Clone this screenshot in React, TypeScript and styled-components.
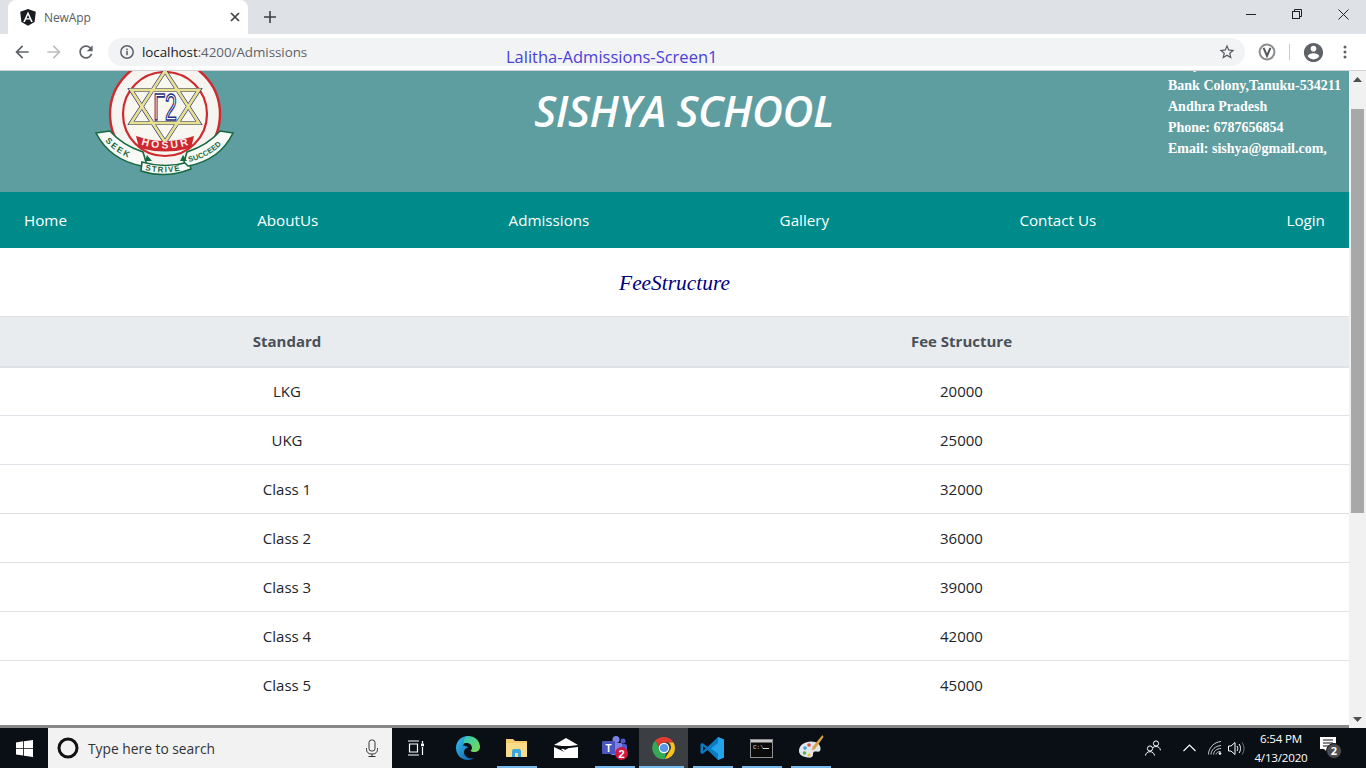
import React from "react";
import styled, { createGlobalStyle } from "styled-components";

const UI = `"Open Sans", "Noto Sans", Arial, sans-serif`;

const Global = createGlobalStyle`
  html, body { margin: 0; padding: 0; height: 100%; overflow: hidden; background: #fff; }
  * { box-sizing: border-box; }
  body { font-family: ${UI}; }
`;

const Screen = styled.div`
  position: relative;
  width: 1366px;
  height: 768px;
  display: flex;
  flex-direction: column;
  overflow: hidden;
`;

/* ---------- browser chrome ---------- */
const TabStrip = styled.div`
  height: 34px;
  background: #dee1e6;
  display: flex;
  align-items: flex-end;
  padding-left: 8px;
  flex: none;
`;
const Tab = styled.div`
  width: 240px;
  height: 34px;
  background: #fff;
  border-radius: 8px 8px 0 0;
  display: flex;
  align-items: center;
  padding: 0 8px 0 12px;
  gap: 8px;
`;
const TabTitle = styled.span`
  flex: 1;
  font-size: 12px;
  color: #5a5d62;
  letter-spacing: -0.1px;
`;
const NewTab = styled.div`
  width: 28px;
  height: 28px;
  margin: 0 0 3px 8px;
  display: flex;
  align-items: center;
  justify-content: center;
`;
const WindowControls = styled.div`
  margin-left: auto;
  display: flex;
  align-self: flex-start;
`;
const WindowButton = styled.div`
  width: 46px;
  height: 28px;
  display: flex;
  align-items: center;
  justify-content: center;
`;
const Toolbar = styled.div`
  height: 37px;
  background: #fff;
  border-bottom: 1px solid #cfd1d3;
  display: flex;
  align-items: flex-start;
  padding: 4px 5px 0 6px;
  flex: none;
`;
const NavButton = styled.div`
  width: 32px;
  height: 28px;
  display: flex;
  align-items: center;
  justify-content: center;
  flex: none;
`;
const Omnibox = styled.div`
  flex: 1;
  height: 28px;
  margin: 0 6px;
  background: #f1f3f4;
  border-radius: 14px;
  display: flex;
  align-items: center;
  padding: 0 9px 0 11px;
`;
const UrlHost = styled.span`
  margin-left: 7px;
  font-size: 13.4px;
  letter-spacing: -0.05px;
  color: #202124;
  flex: 1;
`;
const UrlPath = styled.span`
  color: #5f6368;
`;
const ToolDivider = styled.div`
  width: 1px;
  height: 16px;
  margin: 6px 7px 0 6px;
  background: #c8cacc;
  flex: none;
`;
const Overlay = styled.div`
  position: absolute;
  left: 506px;
  top: 45px;
  font-size: 16.5px;
  line-height: 23px;
  color: #4a3fd8;
  white-space: nowrap;
`;

/* ---------- page ---------- */
const Viewport = styled.div`
  flex: 1;
  min-height: 0;
  display: flex;
`;
const PageColumn = styled.div`
  flex: 1;
  min-width: 0;
  overflow: hidden;
  display: flex;
  flex-direction: column;
  border-bottom: 3px solid #888;
`;
const Header = styled.header`
  height: 160px;
  margin-top: -39px;
  background: #5f9ea0;
  display: grid;
  grid-template-columns: 337px 694px 1fr;
  flex: none;
`;
const LogoCell = styled.div`
  padding: 34px 0 0 95px;
`;
const SchoolName = styled.h1`
  margin: 0;
  padding-top: 55px;
  font: italic 600 42.5px/48px ${UI};
  letter-spacing: -0.4px;
  color: #fff;
  text-align: center;
  white-space: nowrap;
`;
const Address = styled.div`
  padding: 22px 0 0 137px;
  font: bold 14px/21px "Liberation Serif", "Times New Roman", serif;
  color: #fff;
  white-space: nowrap;
`;
const NavBar = styled.nav`
  height: 56px;
  background: #008b8b;
  display: flex;
  align-items: center;
  justify-content: space-between;
  padding: 0 24px;
  flex: none;
`;
const NavLink = styled.a`
  font-size: 15.2px;
  color: #fff;
`;
const SectionTitle = styled.h2`
  margin: 0;
  height: 68px;
  padding-top: 22px;
  font: italic 400 21.4px/26px "Liberation Serif", "Times New Roman", serif;
  color: #000080;
  text-align: center;
  flex: none;
`;
const FeeTable = styled.table`
  width: 100%;
  table-layout: fixed;
  border-collapse: collapse;
  font-size: 15px;
  color: #212529;
`;
const HeadCell = styled.th<{ $width: number }>`
  width: ${(p) => p.$width}px;
  height: 50px;
  padding: 0;
  background: #e9ecef;
  border-top: 1px solid #dee2e6;
  border-bottom: 2px solid #dee2e6;
  font-weight: 700;
  color: #495057;
  text-align: center;
`;
const Row = styled.tr`
  border-bottom: 1px solid #dee2e6;
  &:last-child { border-bottom: none; }
`;
const Cell = styled.td`
  height: 49px;
  padding: 0;
  text-align: center;
`;
const Scrollbar = styled.div`
  width: 17px;
  background: #f1f1f1;
  display: flex;
  flex-direction: column;
  align-items: center;
  flex: none;
`;
const ScrollArrow = styled.div`
  height: 17px;
  width: 17px;
  display: flex;
  align-items: center;
  justify-content: center;
  flex: none;
`;
const ScrollThumb = styled.div`
  width: 13px;
  height: 404px;
  margin-top: 21px;
  margin-bottom: auto;
  background: #a8a8a8;
`;

/* ---------- taskbar ---------- */
const Taskbar = styled.div`
  height: 40px;
  background: #0a0f15;
  display: flex;
  align-items: stretch;
  flex: none;
`;
const StartButton = styled.div`
  width: 48px;
  display: flex;
  align-items: center;
  justify-content: center;
  flex: none;
`;
const SearchBox = styled.div`
  width: 344px;
  background: #f2f2f2;
  display: flex;
  align-items: center;
  padding: 0 13px 0 9px;
  gap: 9px;
  flex: none;
`;
const SearchText = styled.span`
  flex: 1;
  font-size: 13.8px;
  color: #333;
`;
const TaskSlot = styled.div<{ $running?: boolean; $active?: boolean; $w?: number }>`
  position: relative;
  width: ${(p) => p.$w ?? 49}px;
  display: flex;
  align-items: center;
  justify-content: center;
  flex: none;
  background: ${(p) => (p.$active ? "#3b3f44" : "transparent")};
  &::after {
    content: "";
    display: ${(p) => (p.$running ? "block" : "none")};
    position: absolute;
    bottom: 0;
    left: ${(p) => (p.$active ? 0 : "4.5px")};
    right: ${(p) => (p.$active ? "4px" : "4.5px")};
    height: 2px;
    background: #76b9ed;
  }
`;
const TaskViewSlot = styled(TaskSlot)`
  padding-right: 3px;
`;
const Tray = styled.div`
  margin-left: auto;
  display: flex;
  align-items: center;
  flex: none;
`;
const TrayIcon = styled.div<{ $w: number }>`
  width: ${(p) => p.$w}px;
  display: flex;
  align-items: center;
  justify-content: center;
`;
const Clock = styled.div`
  width: 58px;
  margin-left: 5px;
  font-size: 11.6px;
  line-height: 19px;
  color: #fff;
  text-align: center;
  letter-spacing: -0.2px;
  white-space: nowrap;
`;

/* ---------- drawings ---------- */
const Mat = ({ d, color = "#5f6368", size = 20 }: { d: string; color?: string; size?: number }) => (
  <svg width={size} height={size} viewBox="0 0 24 24" fill={color}><path d={d} /></svg>
);
const BACK = "M20 11H7.83l5.59-5.59L12 4l-8 8 8 8 1.41-1.41L7.83 13H20v-2z";
const FWD = "M4 11h12.17l-5.59-5.59L12 4l8 8-8 8-1.41-1.41L16.17 13H4v-2z";
const RELOAD = "M17.65 6.35C16.2 4.9 14.21 4 12 4c-4.42 0-7.99 3.58-7.99 8s3.57 8 7.99 8c3.73 0 6.84-2.55 7.73-6h-2.08c-.82 2.33-3.04 4-5.65 4-3.31 0-6-2.69-6-6s2.69-6 6-6c1.66 0 3.14.69 4.22 1.78L13 11h7V4l-2.35 2.35z";
const STAR = "M22 9.24l-7.19-.62L12 2 9.19 8.63 2 9.24l5.46 4.73L5.82 21 12 17.27 18.18 21l-1.63-7.03L22 9.24zM12 15.4l-3.76 2.27 1-4.28-3.32-2.88 4.38-.38L12 6.1l1.71 4.04 4.38.38-3.32 2.88 1 4.28L12 15.4z";
const ACCOUNT = "M12 2C6.48 2 2 6.48 2 12s4.48 10 10 10 10-4.48 10-10S17.52 2 12 2zm0 3c1.66 0 3 1.34 3 3s-1.34 3-3 3-3-1.34-3-3 1.34-3 3-3zm0 14.2c-2.5 0-4.71-1.28-6-3.22.03-1.99 4-3.08 6-3.08 1.99 0 5.97 1.09 6 3.08-1.29 1.94-3.5 3.22-6 3.22z";

const AngularIcon = () => (
  <svg width="16" height="17" viewBox="0 0 16 17">
    <path d="M8 0 .2 2.8 1.4 13 8 16.8 14.6 13 15.8 2.8z" fill="#1a1c20" />
    <path d="M8 2.4 3.2 13h1.8l1-2.5h4l1 2.5h1.8zM8 6l1.4 3.2H6.6z" fill="#fff" />
  </svg>
);
const InfoIcon = () => (
  <svg width="16" height="16" viewBox="0 0 16 16" fill="none">
    <circle cx="8" cy="8" r="6.2" stroke="#5f6368" strokeWidth="1.5" />
    <rect x="7.2" y="7" width="1.6" height="4.2" fill="#5f6368" />
    <rect x="7.2" y="4.6" width="1.6" height="1.6" fill="#5f6368" />
  </svg>
);
const VExtension = () => (
  <svg width="18" height="18" viewBox="0 0 18 18" fill="none">
    <circle cx="9" cy="9" r="7.4" fill="#fff" stroke="#8b8d90" strokeWidth="2" />
    <path d="M5.6 4.8 9 13l3.4-8.2" stroke="#55585c" strokeWidth="2" />
  </svg>
);
const Dots = () => (
  <svg width="4" height="14" viewBox="0 0 4 14" fill="#5f6368">
    <circle cx="2" cy="2" r="1.5" /><circle cx="2" cy="7" r="1.5" /><circle cx="2" cy="12" r="1.5" />
  </svg>
);

const SchoolLogo = () => (
  <svg width="140" height="110" viewBox="95 64 140 110" style={{ display: "block" }}>
    <circle cx="165" cy="112" r="55" fill="#f6f4f0" stroke="#cf2a2e" strokeWidth="2.4" />
    <circle cx="165" cy="112" r="42" fill="#f8f7f0" stroke="#cf2a2e" strokeWidth="2.2" />
    <g fill="none" strokeLinejoin="miter">
      <path d="M165 69 199 121H131z" stroke="#2d3277" strokeWidth="4" />
      <path d="M165 140 199 88H131z" stroke="#2d3277" strokeWidth="4" />
      <path d="M165 69 199 121H131z" stroke="#e8e290" strokeWidth="2.8" />
      <path d="M165 140 199 88H131z" stroke="#e8e290" strokeWidth="2.8" />
    </g>
    <text transform="translate(165 118) scale(.58 1)" textAnchor="middle" fontFamily="Liberation Sans, sans-serif" fontSize="37" fill="#fff" stroke="#27307f" strokeWidth="1.6">Γ2</text>
    <path d="M136 134Q165 144 194 134L191 146Q165 153 139 146z" fill="#cd2730" />
    <path id="hosurArc" d="M139 142Q165 151 191 142" fill="none" />
    <text fontFamily="Liberation Sans, sans-serif" fontWeight="700" fontSize="10.500" fill="#fbeeea" letterSpacing="2.6">
      <textPath href="#hosurArc" startOffset="2">HOSUR</textPath>
    </text>
    <path d="M96 131 110 129Q122 143 143 150L146 160 142 164Q110 158 96 131z" fill="#f7faf7" stroke="#17693f" strokeWidth="1.6" />
    <path d="M142 160Q165 167 189 160L191 167Q165 177 141 169z" fill="#f7faf7" stroke="#17693f" strokeWidth="1.6" />
    <path d="M233 131 220 129Q208 143 187 150L184 160 188 164Q220 158 233 131z" fill="#f7faf7" stroke="#17693f" strokeWidth="1.6" />
    <path d="M147 153l5 6h-7zM183 153l4 6h-7z" fill="#17693f" />
    <path id="seekArc" d="M105 139Q118 154 141 160" fill="none" />
    <path id="striveArc" d="M145 168Q165 173 187 167" fill="none" />
    <path id="succArc" d="M189 160Q214 154 228 135" fill="none" />
    <g fontFamily="Liberation Sans, sans-serif" fontWeight="700" fill="#17693f">
      <text fontSize="8.500" letterSpacing="1.800"><textPath href="#seekArc">SEEK</textPath></text>
      <text fontSize="8" letterSpacing="1.300"><textPath href="#striveArc">STRIVE</textPath></text>
      <text fontSize="7.500" letterSpacing="0.100"><textPath href="#succArc">SUCCEED</textPath></text>
    </g>
  </svg>
);

const ArrowGlyph = ({ up }: { up?: boolean }) => (
  <svg width="9" height="5" viewBox="0 0 9 5"><path d={up ? "M4.5 0 9 5H0z" : "M4.5 5 9 0H0z"} fill="#505050" /></svg>
);

const WindowsLogo = () => (
  <svg width="17" height="17" viewBox="0 0 17 17" fill="#fff">
    <path d="M0 2.4 7.2 1.3v6.6H0zM8 1.2 17 0v7.9H8zM0 8.8h7.2v6.7L0 14.5zM8 8.8h9V17l-9-1.3z" />
  </svg>
);
const Cortana = () => (
  <svg width="22" height="22" viewBox="0 0 22 22" fill="none"><circle cx="11" cy="11" r="9" stroke="#111" strokeWidth="3" /></svg>
);
const Mic = () => (
  <svg width="14" height="18" viewBox="0 0 14 18" fill="none" stroke="#333" strokeWidth="1">
    <rect x="4" y="1" width="6" height="11" rx="2.5" />
    <path d="M1.5 9v1.5A4.5 4.5 0 0 0 6 15h2a4.5 4.5 0 0 0 4.5-4.5V9M7 15v2.5M3.5 17.5h7" />
  </svg>
);
const TaskView = () => (
  <svg width="18" height="16" viewBox="0 0 18 16" fill="none" stroke="#fff" strokeWidth="1.2">
    <path d="M1 1h11M1 15h11M2.5 4h8v8h-8zM15.500 1v2.500M15.500 7v8" />
    <rect x="14" y="3.600" width="3" height="2.600" fill="#fff" stroke="none" />
  </svg>
);
const EdgeIcon = () => (
  <svg width="26" height="26" viewBox="0 0 26 26">
    <defs>
      <linearGradient id="edgeA" x1="0" y1="0" x2="1" y2="1"><stop offset="0" stopColor="#35c1f1" /><stop offset="1" stopColor="#0c59a4" /></linearGradient>
      <linearGradient id="edgeB" x1="0" y1="0" x2="1" y2="1"><stop offset="0" stopColor="#31c6c0" /><stop offset="1" stopColor="#7bdc4b" /></linearGradient>
    </defs>
    <path d="M13 1C6 1 1 6.500 1 13c0 7 5.500 12 11.500 12 2.700 0 5-.7 7-2-5 1.300-10.500-1-10.500-6 0-2.500 2-4 4-4.500-.5-1-3-2-5-1.500C10 6 12 3.500 13 1z" fill="url(#edgeA)" />
    <path d="M13 1c6.500 0 12 4.500 12 11 0 3-2.500 5-5.500 5-2 0-3.500-.5-4-1.500 1-.5 1.500-1.500 1.500-2.500C17 9 12.500 7 9 8.500 8 5 10 1 13 1z" fill="url(#edgeB)" />
  </svg>
);
const FolderIcon = () => (
  <svg width="23" height="20" viewBox="0 0 23 20">
    <path d="M1 1h7l2 2h12v15a1 1 0 0 1-1 1H2a1 1 0 0 1-1-1z" fill="#f3cd6a" />
    <path d="M1 5h21v13a1 1 0 0 1-1 1H2a1 1 0 0 1-1-1z" fill="#f8dc8a" />
    <path d="M7 19v-6l1-2h7l1 2v6h-3v-4h-3v4z" fill="#3aa6e0" />
  </svg>
);
const MailIcon = () => (
  <svg width="24" height="20" viewBox="0 0 24 20">
    <path d="M0 7 12 0l12 7-12 1.500z" fill="#fff" />
    <path d="M0 9l10.500 5L7 11l17-2v11H0z" fill="#fff" />
    <path d="M6 8h12l-7 4z" fill="#0a0f15" />
  </svg>
);
const TeamsIcon = () => (
  <svg width="28" height="26" viewBox="0 0 28 26">
    <circle cx="15" cy="4.500" r="3.500" fill="#7b83eb" />
    <circle cx="22" cy="6" r="2.500" fill="#5059c9" />
    <rect x="17" y="9" width="9" height="9" rx="2" fill="#5059c9" />
    <rect x="10" y="8" width="11" height="12" rx="1" fill="#7b83eb" />
    <rect x="1" y="6" width="13" height="13" rx="1" fill="#4b53bc" />
    <text x="7.500" y="16.500" textAnchor="middle" fontFamily="Liberation Sans, sans-serif" fontWeight="700" fontSize="10" fill="#fff">T</text>
    <circle cx="20.500" cy="18.500" r="6.500" fill="#d1193f" />
    <text x="20.500" y="22.500" textAnchor="middle" fontFamily="Liberation Sans, sans-serif" fontWeight="700" fontSize="11" fill="#fff">2</text>
  </svg>
);
const ChromeIcon = () => (
  <svg width="24" height="24" viewBox="0 0 48 48">
    <path d="M24 2a22 22 0 0 1 19 11H24a11 11 0 0 0-10.400 7.500L6.500 9.200A22 22 0 0 1 24 2z" fill="#e33b2e" />
    <path d="M43 13a22 22 0 0 1-17.500 33L35 30a11 11 0 0 0-2-17z" fill="#f9c21a" />
    <path d="M6.500 9.200 16 26a11 11 0 0 0 12 8.500L25.500 46A22 22 0 0 1 6.500 9.200z" fill="#35a853" />
    <circle cx="24" cy="24" r="10.500" fill="#fff" />
    <circle cx="24" cy="24" r="8.200" fill="#5a95ea" />
  </svg>
);
const VSCodeIcon = () => (
  <svg width="25" height="25" viewBox="0 0 25 25">
    <path d="M18 1 24 3.500V21.500L18 24 7.500 14 2.500 18 .5 17V8l2-1 5 4z" fill="#0a7cc4" />
    <path d="M18 1 24 3.500V21.500L18 24V17.500L11 12.500 18 7z" fill="#22a3ea" />
    <path d="M3 10.200v4.800l2.800-2.400z" fill="#0a0f15" />
  </svg>
);
const CmdIcon = () => (
  <svg width="23" height="19" viewBox="0 0 23 19">
    <rect x=".5" y=".5" width="22" height="18" fill="#0b0b0b" stroke="#8e9091" />
    <rect x="1" y="1" width="21" height="2.500" fill="#c9c9c9" />
    <text x="3" y="10" fontFamily="Liberation Mono, monospace" fontSize="6" fill="#ddd">C:\</text>
    <rect x="13" y="9" width="6" height="1" fill="#ddd" />
  </svg>
);
const PaintIcon = () => (
  <svg width="26" height="26" viewBox="0 0 26 26">
    <path d="M1 16C1 10 7 6.500 13 6.500s10 3 9.500 8c-.4 3-3 2-5 2-2.500 0-2.500 2-2.500 3.500 0 2-2.500 3-5 2.500C5 21.800 1 20 1 16z" fill="#dfe7ec" />
    <circle cx="7" cy="13" r="1.800" fill="#3f9fd8" />
    <circle cx="11" cy="10" r="1.800" fill="#e04a3f" />
    <circle cx="6.500" cy="18" r="1.800" fill="#58b04c" />
    <circle cx="11" cy="20" r="1.600" fill="#f0c030" />
    <path d="M24.500 0 25.500 2 17 14l-3 1.500L14.500 12z" fill="#d9a04a" />
  </svg>
);
const PeopleIcon = () => (
  <svg width="16" height="16" viewBox="0 0 16 16" fill="none" stroke="#fff" strokeWidth="1">
    <circle cx="5" cy="8.500" r="2.600" /><path d="M.5 15.500c.4-2.500 2-3.800 4.500-3.800s4 1.300 4.500 3.800" />
    <circle cx="11" cy="3.500" r="2.600" /><path d="M8 7.500c.9-.7 1.900-1 3-1 2.400 0 4 1.300 4.500 3.800" />
  </svg>
);
const Caret = () => (
  <svg width="13" height="8" viewBox="0 0 13 8" fill="none" stroke="#fff" strokeWidth="1.1"><path d="M.5 7 6.500 1l6 6" /></svg>
);
const WifiIcon = () => (
  <svg width="14" height="14" viewBox="0 0 14 14" fill="none" stroke="#c9c9c9" strokeWidth="1">
    <path d="M.5 13.500C.5 7 6 1 13 .5M3 13.500c.2-4.500 4-8.500 10-9M5.500 13.500c.2-3 3-6 7.500-6M8 13.500c.2-1.500 1.700-3 4.500-3" />
    <circle cx="12" cy="12.500" r="1.300" fill="#fff" stroke="none" />
  </svg>
);
const VolumeIcon = () => (
  <svg width="17" height="15" viewBox="0 0 17 15" fill="none" stroke="#fff" strokeWidth="1">
    <path d="M.5 5v5h2.500L7 13.500v-12L3 5z" /><path d="M9 5c1 1.500 1 3.500 0 5M11 3c2 2.500 2 6.500 0 9" /><path d="M14 1.500c2.700 3.500 2.700 8.500 0 12" stroke="#777" />
  </svg>
);
const NotifyIcon = () => (
  <svg width="26" height="24" viewBox="0 0 26 24">
    <path d="M1 1h16v12H8v3l-3-3H1z" fill="#fff" />
    <path d="M4 4h10M4 7h10M4 10h7" stroke="#0a0f15" strokeWidth="1" />
    <circle cx="15" cy="15" r="7.500" fill="#4b4d50" stroke="#111" strokeWidth="1" />
    <text x="15" y="19" textAnchor="middle" fontFamily="Open Sans, sans-serif" fontWeight="700" fontSize="11" fill="#fff">2</text>
  </svg>
);

const navItems = ["Home", "AboutUs", "Admissions", "Gallery", "Contact Us", "Login"];
const fees: [string, string][] = [
  ["LKG", "20000"], ["UKG", "25000"], ["Class 1", "32000"], ["Class 2", "36000"],
  ["Class 3", "39000"], ["Class 4", "42000"], ["Class 5", "45000"],
];

export default function App() {
  return (
    <Screen>
      <Global />
      <TabStrip>
        <Tab>
          <AngularIcon />
          <TabTitle>NewApp</TabTitle>
          <svg width="10" height="10" viewBox="0 0 10 10" stroke="#3c4043" strokeWidth="1.7"><path d="M1 1l8 8M9 1l-8 8" /></svg>
        </Tab>
        <NewTab>
          <svg width="12" height="12" viewBox="0 0 12 12" stroke="#3c4043" strokeWidth="1.6"><path d="M6 0v12M0 6h12" /></svg>
        </NewTab>
        <WindowControls>
          <WindowButton><svg width="10" height="10" viewBox="0 0 10 10" stroke="#222"><path d="M0 5.500h10" /></svg></WindowButton>
          <WindowButton>
            <svg width="10" height="10" viewBox="0 0 10 10" fill="none" stroke="#222"><rect x=".5" y="2.500" width="7" height="7" /><path d="M2.500 2.500v-2h7v7h-2" /></svg>
          </WindowButton>
          <WindowButton><svg width="11" height="11" viewBox="0 0 11 11" stroke="#222"><path d="M.5.500l10 10M10.500.500l-10 10" /></svg></WindowButton>
        </WindowControls>
      </TabStrip>
      <Toolbar>
        <NavButton><Mat d={BACK} /></NavButton>
        <NavButton><Mat d={FWD} color="#bcbec0" /></NavButton>
        <NavButton><Mat d={RELOAD} /></NavButton>
        <Omnibox>
          <InfoIcon />
          <UrlHost>localhost<UrlPath>:4200/Admissions</UrlPath></UrlHost>
          <Mat d={STAR} size={18} color="#55585c" />
        </Omnibox>
        <NavButton><VExtension /></NavButton>
        <ToolDivider />
        <NavButton><Mat d={ACCOUNT} size={23} /></NavButton>
        <NavButton><Dots /></NavButton>
      </Toolbar>
      <Overlay>Lalitha-Admissions-Screen1</Overlay>
      <Viewport>
        <PageColumn>
          <Header>
            <LogoCell><SchoolLogo /></LogoCell>
            <SchoolName>SISHYA SCHOOL</SchoolName>
            <Address>
              <div>Sishya</div>
              <div>Bank Colony,Tanuku-534211</div>
              <div>Andhra Pradesh</div>
              <div>Phone: 6787656854</div>
              <div>Email: sishya@gmail.com,</div>
            </Address>
          </Header>
          <NavBar>
            {navItems.map((n) => <NavLink key={n}>{n}</NavLink>)}
          </NavBar>
          <SectionTitle>FeeStructure</SectionTitle>
          <FeeTable>
            <thead>
              <tr>
                <HeadCell $width={574}>Standard</HeadCell>
                <HeadCell $width={775}>Fee Structure</HeadCell>
              </tr>
            </thead>
            <tbody>
              {fees.map(([s, f]) => (
                <Row key={s}><Cell>{s}</Cell><Cell>{f}</Cell></Row>
              ))}
            </tbody>
          </FeeTable>
        </PageColumn>
        <Scrollbar>
          <ScrollArrow><ArrowGlyph up /></ScrollArrow>
          <ScrollThumb />
          <ScrollArrow><ArrowGlyph /></ScrollArrow>
        </Scrollbar>
      </Viewport>
      <Taskbar>
        <StartButton><WindowsLogo /></StartButton>
        <SearchBox>
          <Cortana />
          <SearchText>Type here to search</SearchText>
          <Mic />
        </SearchBox>
        <TaskViewSlot $w={51}><TaskView /></TaskViewSlot>
        <TaskSlot><EdgeIcon /></TaskSlot>
        <TaskSlot $running><FolderIcon /></TaskSlot>
        <TaskSlot><MailIcon /></TaskSlot>
        <TaskSlot $running><TeamsIcon /></TaskSlot>
        <TaskSlot $running $active><ChromeIcon /></TaskSlot>
        <TaskSlot $running><VSCodeIcon /></TaskSlot>
        <TaskSlot $running><CmdIcon /></TaskSlot>
        <TaskSlot $running><PaintIcon /></TaskSlot>
        <Tray>
          <TrayIcon $w={42}><PeopleIcon /></TrayIcon>
          <TrayIcon $w={30}><Caret /></TrayIcon>
          <TrayIcon $w={21}><WifiIcon /></TrayIcon>
          <TrayIcon $w={22}><VolumeIcon /></TrayIcon>
          <Clock>6:54 PM<br />4/13/2020</Clock>
          <TrayIcon $w={44}><NotifyIcon /></TrayIcon>
          <TrayIcon $w={12} />
        </Tray>
      </Taskbar>
    </Screen>
  );
}
